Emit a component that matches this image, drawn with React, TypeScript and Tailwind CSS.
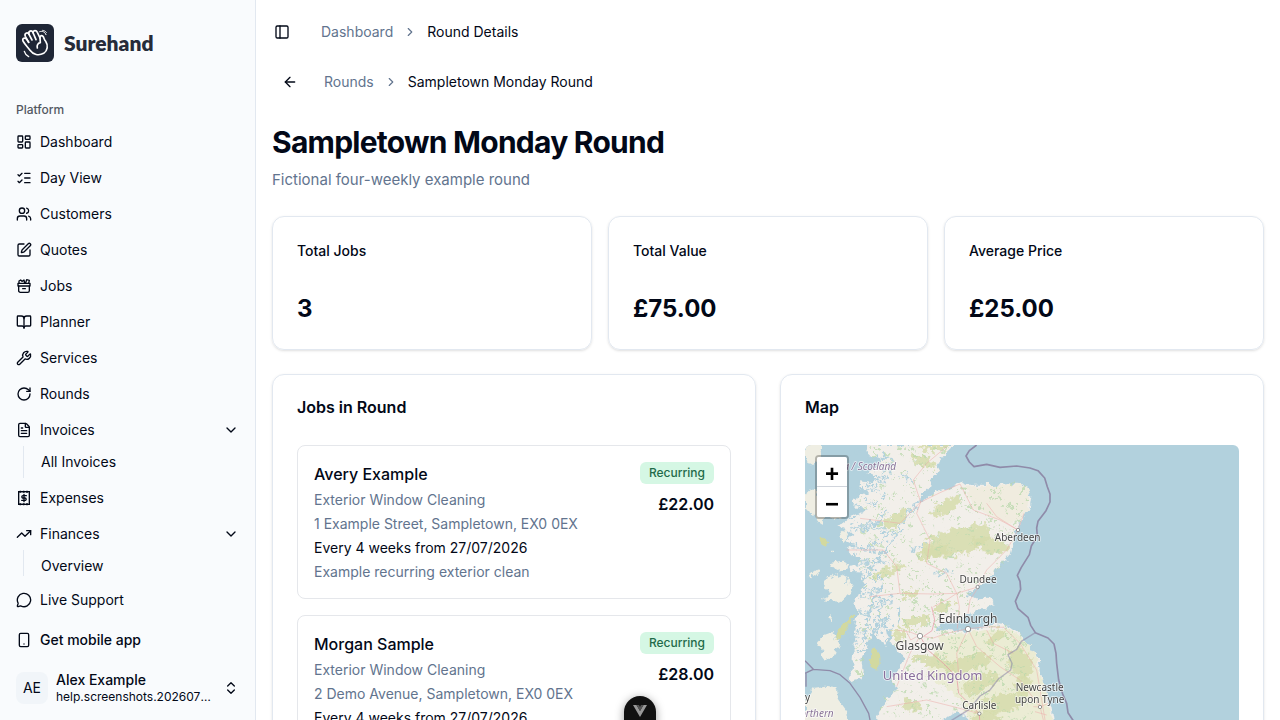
import React, { useState } from 'react';
import {
  ArrowLeft,
  BookOpen,
  ChevronDown,
  ChevronRight,
  ChevronsUpDown,
  FileText,
  LayoutDashboard,
  ListChecks,
  MessageCircle,
  PanelLeft,
  RotateCw,
  Smartphone,
  SquarePen,
  TrendingUp,
  Users,
  Wrench,
} from 'lucide-react';

interface IconProps {
  className?: string;
}

interface NavItem {
  title: string;
  icon: React.ComponentType<IconProps>;
  children?: string[];
}

interface Job {
  customer: string;
  service: string;
  address: string;
  schedule: string;
  notes: string;
  price: string;
}

function JobsIcon({ className }: IconProps) {
  return (
    <svg viewBox="0 0 24 24" fill="none" stroke="currentColor" strokeWidth="2" strokeLinecap="round" strokeLinejoin="round" className={className}>
      <path d="M4 12v7a2.5 2.5 0 0 0 2.5 2.5h11A2.5 2.5 0 0 0 20 19v-7" />
      <path d="M3 8h18v4H3z" />
      <path d="M10 16h4" />
      <path d="M4.500 8V4.500L7 3l2 2 3-2 1 5" />
      <path d="M14.500 7l1.500-4.500 4 1L19 8" />
    </svg>
  );
}

function ExpensesIcon({ className }: IconProps) {
  return (
    <svg viewBox="0 0 24 24" fill="none" stroke="currentColor" strokeLinecap="round" strokeLinejoin="round" className={className}>
      <path d="M4 2.500h16v19H4z" strokeWidth="2" strokeLinejoin="miter" />
      <path d="M6 21.500h12M6 2.500h12" strokeWidth="3" strokeDasharray="1 4" />
      <path d="M15.500 8.500h-5a1.750 1.750 0 0 0 0 3.500h3a1.750 1.750 0 0 1 0 3.500h-5M12 6.500v11" strokeWidth="2" />
    </svg>
  );
}

function Logo() {
  return (
    <svg viewBox="48 72 114 114" className="size-[38px] shrink-0" fill="none" stroke="#fff" strokeWidth="5" strokeLinecap="round" strokeLinejoin="round" aria-hidden="true">
      <rect x="48" y="72" width="114" height="114" rx="18" fill="#1f2636" stroke="none" />
      <path d="M86 127 76 109c-4-9 6-14 11-6l9 17" />
      <path d="M87 103c-3-10 8-14 12-5l9 21" />
      <path d="M99 98c1-8 10-8 13-1l8 17c0-7 5-9 9-5 3 4 3 9 8 15 8 12 6 28-6 36-15 8-32 4-41-9-6-9-15-17-21-28-3-8 6-12 11-5l6 9" />
      <path d="M120 114l1 14c-8 2-11 8-9 16" />
      <path d="M119 95c9-3 16 1 19 9M128 91c4 0 8 3 11 6" strokeWidth="3" />
      <path d="M73 154c2 7 7 13 13 16" strokeWidth="4" />
    </svg>
  );
}

const navItems: NavItem[] = [
  { title: 'Dashboard', icon: LayoutDashboard },
  { title: 'Day View', icon: ListChecks },
  { title: 'Customers', icon: Users },
  { title: 'Quotes', icon: SquarePen },
  { title: 'Jobs', icon: JobsIcon },
  { title: 'Planner', icon: BookOpen },
  { title: 'Services', icon: Wrench },
  { title: 'Rounds', icon: RotateCw },
  { title: 'Invoices', icon: FileText, children: ['All Invoices'] },
  { title: 'Expenses', icon: ExpensesIcon },
  { title: 'Finances', icon: TrendingUp, children: ['Overview'] },
];

const stats = [
  { label: 'Total Jobs', value: '3' },
  { label: 'Total Value', value: '£75.00' },
  { label: 'Average Price', value: '£25.00' },
];

const jobs: Job[] = [
  {
    customer: 'Avery Example',
    service: 'Exterior Window Cleaning',
    address: '1 Example Street, Sampletown, EX0 0EX',
    schedule: 'Every 4 weeks from 27/07/2026',
    notes: 'Example recurring exterior clean',
    price: '£22.00',
  },
  {
    customer: 'Morgan Sample',
    service: 'Exterior Window Cleaning',
    address: '2 Demo Avenue, Sampletown, EX0 0EX',
    schedule: 'Every 4 weeks from 27/07/2026',
    notes: 'Example recurring exterior clean',
    price: '£28.00',
  },
];

function NavEntry({ item }: { item: NavItem }) {
  const [isOpen, setIsOpen] = useState(true);
  const Icon = item.icon;

  if (!item.children) {
    return (
      <li>
        <a href="#" className="flex h-8 items-center gap-2 rounded-md p-2 hover:bg-slate-100">
          <Icon className="size-4 shrink-0" />
          <span>{item.title}</span>
        </a>
      </li>
    );
  }

  return (
    <li>
      <button
        type="button"
        aria-expanded={isOpen}
        onClick={() => setIsOpen(!isOpen)}
        className="flex h-8 w-full items-center gap-2 rounded-md p-2 text-left hover:bg-slate-100"
      >
        <Icon className="size-4 shrink-0" />
        <span className="flex-1">{item.title}</span>
        <ChevronDown className="size-4 shrink-0" />
      </button>
      {isOpen && (
        <ul className="ml-[15px] border-l border-slate-200 py-0.5 pl-[9px]">
          {item.children.map((child) => (
            <li key={child}>
              <a href="#" className="flex h-7 items-center rounded-md px-2 hover:bg-slate-100">
                {child}
              </a>
            </li>
          ))}
        </ul>
      )}
    </li>
  );
}

function Sidebar() {
  return (
    <aside className="flex w-64 shrink-0 flex-col border-r border-slate-200 bg-[#f9fbfd]">
      <div className="flex items-center gap-2.5 px-4 py-6">
        <Logo />
        <span className="font-['Lato',sans-serif] text-[21px] leading-7 font-extrabold text-[#262c3a]">Surehand</span>
      </div>
      <nav className="min-h-0 flex-1 overflow-y-auto p-2 [scrollbar-width:none]">
        <div className="flex h-8 items-center px-2 text-xs font-medium text-[#535862]">Platform</div>
        <ul className="flex flex-col gap-1">
          {navItems.map((item) => (
            <NavEntry key={item.title} item={item} />
          ))}
        </ul>
      </nav>
      <div className="flex flex-col gap-2 p-2">
        <a href="#" className="flex h-8 items-center gap-2 rounded-md p-2 hover:bg-slate-100">
          <MessageCircle className="size-4" />
          Live Support
        </a>
        <button type="button" className="flex h-8 items-center gap-2 rounded-md p-2 font-medium hover:bg-slate-100">
          <Smartphone className="size-4" />
          Get mobile app
        </button>
        <button type="button" className="flex h-12 items-center gap-2 rounded-md p-2 text-left hover:bg-slate-100">
          <span className="flex size-8 shrink-0 items-center justify-center rounded-lg bg-slate-100">AE</span>
          <span className="min-w-0 flex-1">
            <span className="block truncate leading-[18px] font-medium">Alex Example</span>
            <span className="block truncate text-xs leading-4">help.screenshots.20260727@example.com</span>
          </span>
          <ChevronsUpDown className="size-4 shrink-0" />
        </button>
      </div>
    </aside>
  );
}

function Breadcrumb({ parent, current }: { parent: string; current: string }) {
  return (
    <nav aria-label="breadcrumb">
      <ol className="flex items-center gap-2.5">
        <li>
          <a href="#" className="text-slate-500 hover:text-slate-900">{parent}</a>
        </li>
        <li aria-hidden="true">
          <ChevronRight className="size-3.5 text-slate-500" />
        </li>
        <li aria-current="page">{current}</li>
      </ol>
    </nav>
  );
}

function JobCard({ job }: { job: Job }) {
  return (
    <li className="flex items-start justify-between gap-4 rounded-lg border border-gray-200 p-4">
      <div className="flex flex-col gap-1">
        <h3 className="text-base font-medium">{job.customer}</h3>
        <p className="text-slate-500">{job.service}</p>
        <p className="text-slate-500">{job.address}</p>
        <p>{job.schedule}</p>
        <p className="text-slate-500">{job.notes}</p>
      </div>
      <div className="flex flex-col items-end gap-2">
        <span className="rounded-md bg-[#d5f7e4] px-[9px] py-[3px] text-xs font-medium text-[#1f6b4a]">Recurring</span>
        <span className="text-base font-semibold">{job.price}</span>
      </div>
    </li>
  );
}

// moorland and forest patches: x, y, rx, ry, rotation
const patches = [
  [290, 240, 44, 16, -35],
  [440, 200, 48, 18, -30],
  [470, 305, 110, 40, -16],
  [570, 315, 56, 22, 10],
  [400, 338, 50, 18, -20],
  [265, 395, 54, 14, -18],
  [430, 500, 36, 12, -25],
  [350, 545, 46, 16, -15],
  [340, 460, 30, 10, -20],
  [370, 65, 40, 16, 20],
  [400, 20, 44, 12, 0],
  [300, 585, 24, 18, 0],
  [590, 590, 34, 16, -30],
  [400, 665, 60, 18, 15],
  [510, 670, 70, 24, -15],
  [540, 730, 60, 26, -25],
  [660, 670, 36, 50, -20],
  [600, 790, 60, 30, -10],
  [670, 740, 24, 40, 0],
  [330, 795, 30, 16, 20],
  [560, 830, 44, 16, 0],
];

// woodland specks spread over the land
const woods = Array.from({ length: 480 }, (_, i) => ({
  x: 165 + ((i * 137) % 520) + ((i * 31) % 17),
  y: 20 + ((i * 211) % 820),
  r: 2 + ((i * 7) % 4),
}));

// sea inlets breaking up the west coast
const inlets = Array.from({ length: 70 }, (_, i) => ({
  x: 140 + ((i * 53) % 120),
  y: 30 + ((i * 97) % 620),
  r: 7 + ((i * 5) % 12),
}));

// narrow sea and fresh water lochs
const lochs = [
  'M178 440 340 205 372 170',
  'M196 262 262 268M150 262 250 240',
  'M150 318 230 330M160 365 214 368',
  'M205 62 262 96M196 104 250 124M180 150 244 150',
  'M235 590 242 500 268 470M262 600 252 540',
  'M190 610 212 500 240 440M222 600 226 540',
  'M290 560 300 500M204 470 250 430',
  'M120 180 190 200M250 40 290 80M300 100 334 120',
  'M400 404 450 396M330 330 372 318',
];

const places = [
  { name: 'Aberdeen', x: 653, y: 304, size: 30, dotX: 654, dotY: 270 },
  { name: 'Dundee', x: 534, y: 429, size: 30, dotX: 533, dotY: 441 },
  { name: 'Edinburgh', x: 504, y: 550, size: 36, dotX: 504, dotY: 567 },
  { name: 'Glasgow', x: 359, y: 630, size: 36, dotX: 360, dotY: 588 },
  { name: 'Carlisle', x: 538, y: 808, size: 30, dotX: 538, dotY: 821 },
  { name: 'Newcastle', x: 719, y: 753, size: 30, dotX: 720, dotY: 801 },
  { name: 'upon Tyne', x: 719, y: 789, size: 30, dotX: 720, dotY: 801 },
];

const mainland =
  'M205 15 198 32 214 48 236 56 244 76 216 84 196 100 226 112 214 128 182 124 178 142 206 156 176 168 152 184 170 204 198 214 164 224 130 250 112 256 140 268 160 282 138 300 162 312 140 330 156 348 190 352 176 372 146 378 156 396 196 398 184 424 196 440 176 462 166 490 172 520 164 556 170 590 160 620 162 650 158 690 146 712 160 726 182 718 188 690 184 660 200 630 204 600 222 570 234 590 250 620 264 604 258 572 276 566 272 600 290 628 310 650 304 690 272 712 288 744 262 772 248 800 236 826 244 860 420 860 446 832 470 814 500 830 520 860 764 860 754 800 738 768 728 730 722 690 716 655 690 620 672 594 646 574 620 556 585 552 550 562 510 572 460 572 410 566 400 560 440 548 480 542 510 520 530 508 560 508 582 490 566 476 530 478 504 466 500 456 520 446 550 430 582 404 602 376 628 344 640 300 654 262 672 230 690 200 694 170 684 146 662 132 620 130 580 136 540 134 500 134 480 126 450 142 420 150 390 164 364 190 358 178 372 156 390 140 396 114 420 92 410 74 436 40 462 15z';

const islands =
  'M15 15h54l-10 20 8 20-28 20-24-14zM15 160l26-12 24 14 36-2 8 18 24 10-10 20 12 18-28 10-20-8-22 20-20-12-4-22-26-14zM84 412l30-12 26 14 20 26-10 26-34 16-50-4 30-18-22-12zM92 370l40-8 10 20-34 8zM84 530l14-6-6 24zM52 606l22-20 20-8 8 14 16 8-10 40-26 14-24-6 14-18-22-12zM26 408l28-20 6 6-28 18zM96 322l10 6-6 10zM15 780l24-34 36-6 34 4 10 40 22 30 8 46H15zM120 280l20-16 4 24-20 20z';

function RoundMap() {
  return (
    <div className="relative h-96 overflow-hidden rounded-md bg-[#b2d1dd]">
      <svg viewBox="15 15 1302 1152" preserveAspectRatio="xMinYMin slice" className="block size-full" role="img" aria-label="Map of northern Britain">
        <defs>
          <filter id="coast" x="0" y="0" width="100%" height="100%">
            <feTurbulence type="fractalNoise" baseFrequency="0.045" numOctaves="3" seed="4" />
            <feDisplacementMap in="SourceGraphic" scale="26" xChannelSelector="R" yChannelSelector="G" />
          </filter>
          <filter id="rough" x="-5%" y="-5%" width="110%" height="110%">
            <feTurbulence type="fractalNoise" baseFrequency="0.06" numOctaves="3" seed="9" />
            <feDisplacementMap in="SourceGraphic" scale="46" xChannelSelector="R" yChannelSelector="G" />
          </filter>
          <clipPath id="land">
            <path d={mainland} />
          </clipPath>
        </defs>
        <g filter="url(#coast)">
          <path d={mainland} fill="#f2efea" />
          <path d={islands} fill="#efeee3" />
          <path d="M148 524l12 4-14 36-26 36-16-2 14-34zM208 632l18-10 14 26 2 28-16 14-20-18zM62 298l14-8 10 14-12 16-14-8z" fill="#d2d9a0" />
          <g clipPath="url(#land)">
            <path d="M420 590 620 560 700 620 760 860H520L480 780 380 700z" fill="#ebecd4" />
            <path d="M500 140 690 130 680 230 620 250 520 200z" fill="#f0ecdf" />
          </g>
        </g>
        <g filter="url(#rough)">
          <g clipPath="url(#land)">
            {patches.map(([x, y, rx, ry, angle]) => (
              <ellipse key={`${x}-${y}`} cx={x} cy={y} rx={rx} ry={ry} transform={`rotate(${angle} ${x} ${y})`} fill="#d6dcab" opacity="0.85" />
            ))}
            {woods.map((wood, index) => (
              <ellipse key={index} cx={wood.x} cy={wood.y} rx={wood.r + 2} ry={wood.r} fill="#b9d8ac" opacity="0.75" />
            ))}
          </g>
          {inlets.map((inlet, index) => (
            <ellipse key={index} cx={inlet.x} cy={inlet.y} rx={inlet.r} ry="3" transform={`rotate(-20 ${inlet.x} ${inlet.y})`} fill="#b2d1dd" />
          ))}
          {lochs.map((d) => (
            <path key={d} d={d} fill="none" stroke="#b2d1dd" strokeWidth="6" />
          ))}
        </g>
        <g fill="none" stroke="#edaaa8" strokeWidth="1.500" strokeLinejoin="round">
          <path d="M290 570 330 576 360 588 400 594 440 580 500 567 560 560 610 562 660 610 710 690 722 760 735 840" />
          <path d="M395 500 404 540 396 572 372 588M360 588 384 630 430 670 470 710 476 760 538 821 540 860" stroke="#e892a2" strokeWidth="2" />
          <path d="M472 566 478 500 470 460 440 400 380 370 390 300 350 220 362 186 420 158 480 132M470 460 533 441 560 390 620 330 654 270 672 220" />
          <path d="M470 460 400 462 300 460 210 470M300 460 290 380 250 330 140 330M400 500 440 480 470 460M504 520 510 480 533 445" />
          <path d="M362 186 300 250 180 235M362 186 340 120 380 70 440 20M654 270 600 240 520 210 480 132M654 270 590 230 560 190" />
          <path d="M360 588 330 640 310 690 290 740M504 567 530 620 600 680 660 720 720 801M504 567 470 640 476 700M538 821 460 800 380 780 260 800" />
          <path d="M700 800 720 801 745 790M715 780 730 840M705 815 740 825M320 575 332 600 350 590M560 570 580 610 640 640" />
        </g>
        <g fill="none" stroke="#8f8ba9" strokeLinejoin="round">
          <path d="M530 15 508 32 498 48 508 66 522 80 560 73 600 82 650 78 690 84 714 92 734 114 742 140 750 162 750 186 738 212 714 244 710 264 712 288 694 318 688 344 664 382 652 406 660 424 662 448 646 484 654 506 684 532 692 556 706 578 744 594 762 612 768 640 770 670 776 720 788 762 800 790 804 818 820 842" strokeWidth="5" />
          <path d="M15 662 40 688 15 700M40 688 90 692 120 704 150 730 180 772 206 820 214 860M18 700V740" strokeWidth="4" />
          <path d="M706 578 664 604 650 628 624 644 636 670 632 690 596 716 570 750 540 768 508 808 440 850" strokeWidth="4" opacity="0.6" />
        </g>
        <g fill="#fff" stroke="#666" strokeWidth="2">
          {places.slice(0, 6).map((place) => (
            <circle key={place.name} cx={place.dotX} cy={place.dotY} r={place.size > 30 ? 8 : 5} />
          ))}
        </g>
        <g fontFamily="'Noto Sans', sans-serif" stroke="#fff" strokeOpacity="0.7" strokeWidth="5" strokeLinejoin="round" paintOrder="stroke">
          {places.map((place) => (
            <text key={place.name} x={place.x} y={place.y} fontSize={place.size} textAnchor="middle" fill="#454545">{place.name}</text>
          ))}
          <text x="398" y="720" fontSize="39" textAnchor="middle" fill="#8a6f9c">United Kingdom</text>
          <text x="288" y="89" fontSize="30" fontStyle="italic" textAnchor="end" fill="#8a7599">a / Scotland</text>
          <text x="101" y="831" fontSize="30" fontStyle="italic" textAnchor="end" fill="#8a7599">Northern</text>
          <text x="30" y="783" fontSize="30" textAnchor="end" fill="#454545">Derry</text>
        </g>
      </svg>
      <div className="absolute top-2.5 left-2.5 flex flex-col rounded-sm border-2 border-black/25 bg-clip-padding font-['Liberation_Sans',sans-serif] text-2xl leading-6 font-bold text-black">
        <button type="button" aria-label="Zoom in" className="h-[30px] w-[30px] rounded-t-xs border-b border-gray-300 bg-white pt-1">+</button>
        <button type="button" aria-label="Zoom out" className="h-[30px] w-[30px] rounded-b-xs bg-white pt-1">−</button>
      </div>
    </div>
  );
}

export default function App() {
  return (
    <div className="flex h-screen overflow-hidden bg-white font-['Inter',sans-serif] text-sm text-[#020817]">
      <Sidebar />
      <main className="min-w-0 flex-1 overflow-y-auto [scrollbar-width:none]">
        <header className="flex h-16 items-center gap-[25px] px-4">
          <button type="button" aria-label="Toggle Sidebar" className="-ml-1 flex size-7 items-center justify-center rounded-md hover:bg-slate-100">
            <PanelLeft className="size-4" />
          </button>
          <Breadcrumb parent="Dashboard" current="Round Details" />
        </header>

        <div className="flex flex-col gap-6 px-4 pb-4">
          <div className="flex items-center gap-4">
            <button type="button" aria-label="Back to rounds" className="flex size-9 items-center justify-center rounded-md hover:bg-slate-100">
              <ArrowLeft className="size-4" />
            </button>
            <Breadcrumb parent="Rounds" current="Sampletown Monday Round" />
          </div>

          <div>
            <h1 className="text-3xl font-bold tracking-tight">Sampletown Monday Round</h1>
            <p className="mt-2 text-[15px] leading-6 text-slate-500">Fictional four-weekly example round</p>
          </div>

          <div className="grid grid-cols-3 gap-4">
            {stats.map((stat) => (
              <section key={stat.label} className="rounded-xl border border-slate-200 p-6 shadow-sm">
                <h2 className="font-medium">{stat.label}</h2>
                <p className="mt-8 text-2xl font-bold">{stat.value}</p>
              </section>
            ))}
          </div>

          <div className="grid grid-cols-2 gap-6">
            <section className="rounded-xl border border-slate-200 p-6 shadow-sm">
              <h2 className="text-base leading-4 font-semibold">Jobs in Round</h2>
              <ul className="mt-[30px] flex flex-col gap-4">
                {jobs.map((job) => (
                  <JobCard key={job.customer} job={job} />
                ))}
              </ul>
            </section>
            <section className="rounded-xl border border-slate-200 p-6 shadow-sm">
              <h2 className="mb-[30px] text-base leading-4 font-semibold">Map</h2>
              <RoundMap />
            </section>
          </div>
        </div>
      </main>

      <button
        type="button"
        aria-label="Open developer tools"
        className="fixed -bottom-4 left-1/2 flex h-10 w-8 -translate-x-1/2 justify-center rounded-full bg-[#111] pt-2 shadow-[0_2px_10px_rgba(0,0,0,0.4)]"
      >
        <svg viewBox="0 0 14 14" className="size-3.5">
          <path d="M0 1h3.500L7 7l3.500-6H14L7 13z" fill="#999" />
          <path d="M3.500 1H6l1 2 1-2h2.500L7 7z" fill="#555" />
        </svg>
      </button>
    </div>
  );
}
